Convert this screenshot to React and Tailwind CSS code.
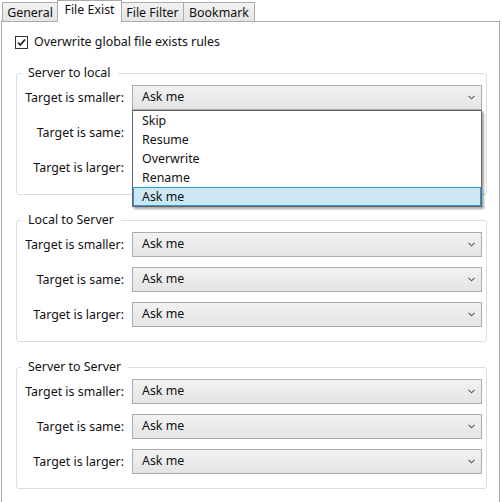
import React from "react";

function Chevron() {
  return (
    <svg width="7" height="5" viewBox="0 0 7 5" className="absolute right-[6px] top-[9px]">
      <path d="M0.5 0.8 L3.5 3.8 L6.5 0.8" fill="none" stroke="#5a5a5a" strokeWidth="1.1" />
    </svg>
  );
}

const items = ["Skip", "Resume", "Overwrite", "Rename", "Ask me"];

function Row({ label, open, hidden }) {
  return (
    <div className="flex items-center h-[25px]">
      <div className="w-[107px] text-right pt-[1px] whitespace-nowrap">{label}</div>
      <div className="ml-[8px] relative w-[350px] h-[25px] border border-[#acacac] bg-gradient-to-b from-[#f2f2f2] to-[#e4e4e4] flex items-center pl-[9px] pb-[1px]">
        {!hidden && <span>Ask me</span>}
        {!hidden && <Chevron />}
        {open && (
          <div className="absolute left-[-1px] top-[24px] w-[350px] border border-[#646464] bg-white z-20 shadow-[2px_2px_2px_rgba(0,0,0,0.35)]">
            {items.map((it, i) => (
              <div
                key={it}
                className={
                  i === items.length - 1
                    ? "h-[19px] flex items-center pl-[8px] pt-[1px] bg-[#cce8f7] border border-[#2f96d6]"
                    : "h-[19px] flex items-center pl-[9px] pt-[2px]"
                }
              >
                {it}
              </div>
            ))}
          </div>
        )}
      </div>
    </div>
  );
}

function Group({ title, open }) {
  return (
    <div className="relative h-[122px] w-[471px] border border-[#d5dfe5] rounded-[3px] pt-[11px] flex flex-col gap-[10px]">
      <div className="absolute left-[4px] top-[-10px] px-[7px] bg-white leading-[18px]">{title}</div>
      <Row label="Target is smaller:" open={open} />
      <Row label="Target is same:" hidden={open} />
      <Row label="Target is larger:" hidden={open} />
    </div>
  );
}

function Tab({ children, active, className }) {
  return active ? (
    <div
      className={
        "relative z-10 h-[22px] mb-[-1px] bg-white border border-b-0 border-[#acacac] flex justify-center pt-[1px] leading-[16px] whitespace-nowrap " +
        className
      }
    >
      {children}
    </div>
  ) : (
    <div
      className={
        "h-[19px] bg-gradient-to-b from-[#f2f2f2] to-[#e5e5e5] border border-b-0 border-[#acacac] flex justify-center pt-[2px] leading-[16px] whitespace-nowrap " +
        className
      }
    >
      {children}
    </div>
  );
}

export default function App() {
  return (
    <div className="w-[502px] h-[502px] bg-white overflow-hidden text-[12.4px] text-[#111] font-['Noto_Sans','Open_Sans',sans-serif]">
      <div className="flex items-end h-[21px] pl-[2px]">
        <Tab className="w-[56px]">General</Tab>
        <Tab active className="w-[65px] ml-[-1px]">File Exist</Tab>
        <Tab className="w-[63px] ml-[-1px]">File Filter</Tab>
        <Tab className="w-[72px] ml-[-1px]">Bookmark</Tab>
      </div>
      <div className="ml-[1px] w-[499px] h-[481px] border-x border-t border-[#acacac] bg-white">
        <div className="mt-[14px] ml-[13px] flex items-center h-[13px]">
          <div className="w-[13px] h-[13px] border border-[#333] bg-white flex items-center justify-center">
            <svg width="11" height="11" viewBox="0 0 11 11">
              <path d="M2 5.5 L4.3 8 L9 2.5" fill="none" stroke="#222" strokeWidth="1.8" />
            </svg>
          </div>
          <span className="ml-[6px] pb-[1px] whitespace-nowrap">Overwrite global file exists rules</span>
        </div>
        <div className="mt-[24px] ml-[14px] flex flex-col gap-[25px]">
          <Group title="Server to local" open />
          <Group title="Local to Server" />
          <Group title="Server to Server" />
        </div>
      </div>
    </div>
  );
}
